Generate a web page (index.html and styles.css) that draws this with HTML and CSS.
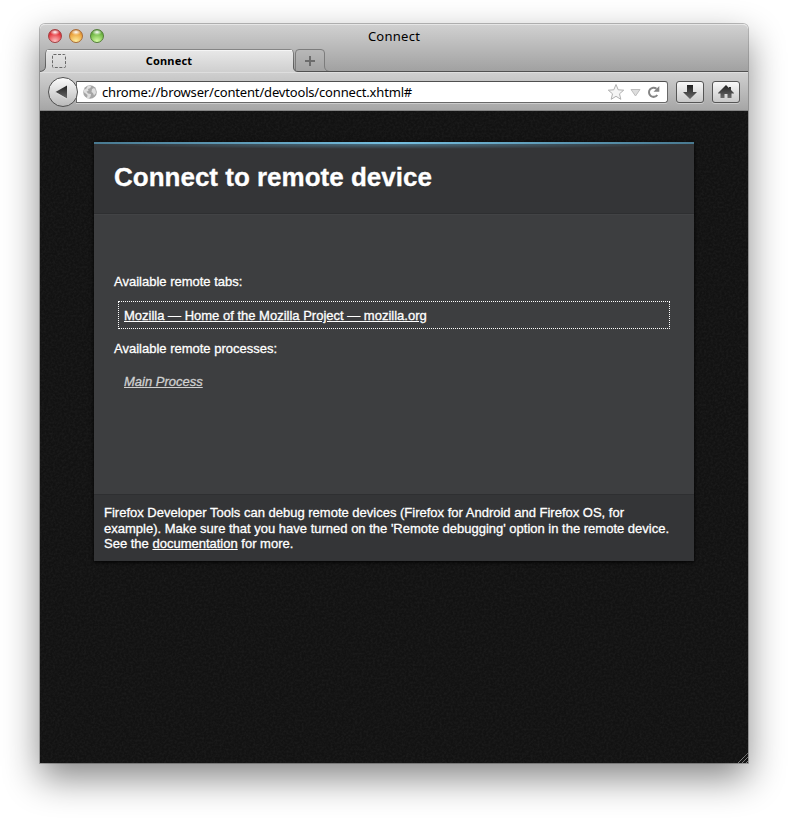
FILE: index.html
```html
<!DOCTYPE html>
<html lang="en">
<head>
<meta charset="utf-8">
<title>Connect</title>
<link rel="stylesheet" href="styles.css">
</head>
<body>
<div class="window">
  <header class="chrome">
    <div class="titlebar">
      <div class="lights"><i class="light red"></i><i class="light amber"></i><i class="light green"></i></div>
      <span class="window-title">Connect</span>
    </div>
    <div class="tabstrip">
      <svg class="tabshape" width="708" height="23" viewBox="0 0 708 23">
        <defs>
          <linearGradient id="tab" x1="0" y1="0" x2="0" y2="1"><stop offset="0" stop-color="#e9e9e9"/><stop offset="1" stop-color="#cfcfcf"/></linearGradient>
          <linearGradient id="edge" x1="0" y1="0" x2="0" y2="1"><stop offset="0" stop-color="#858585"/><stop offset="1" stop-color="#505050"/></linearGradient>
          <linearGradient id="plus" x1="0" y1="0" x2="0" y2="1"><stop offset="0" stop-color="#b8b8b8"/><stop offset="1" stop-color="#a2a2a2"/></linearGradient>
        </defs>
        <path d="M255.500 22V4Q255.500 .500 259 .500H281Q284.500 .500 284.500 4V17Q284.500 21.500 289 22.500" fill="url(#plus)" stroke="#7c7c7c"/>
        <path d="M0 23V22Q5.500 22 5.500 17V4Q5.500 .500 9 .500H250Q253.500 .500 253.500 4V18Q253.500 22 257 22V23Z" fill="url(#tab)"/>
        <path d="M-1 22.500Q5.500 22.500 5.500 17V4Q5.500 .500 9 .500H250Q253.500 .500 253.500 4V18Q253.500 22.500 258 22.500H708" fill="none" stroke="url(#edge)"/>
        <path d="M7 1.500H252" stroke="#f5f5f5"/>
        <rect x="12.500" y="5.500" width="13" height="13" rx="1" fill="none" stroke="#686868" stroke-dasharray="3 1.500"/>
        <path d="M270 7V17M265 12H275" stroke="#6c6c6c" stroke-width="2"/>
      </svg>
      <span class="tab-label">Connect</span>
    </div>
    <div class="toolbar">
      <svg class="back" width="30" height="32" viewBox="0 0 30 32">
        <defs><linearGradient id="bk" x1="0" y1="0" x2="0" y2="1"><stop offset="0" stop-color="#fcfcfc"/><stop offset="1" stop-color="#b9b9b9"/></linearGradient>
        <linearGradient id="ic" x1="0" y1="0" x2="0" y2="1"><stop offset="0" stop-color="#202020"/><stop offset="1" stop-color="#6a6a6a"/></linearGradient></defs>
        <circle cx="15" cy="15" r="14.500" fill="url(#bk)" stroke="#4f4f4f"/>
        <path d="M7.500 15L19 8.500V21.500Z" fill="url(#ic)"/>
        <path d="M8 15.500L19 22" stroke="#eee" stroke-width=".5"/>
      </svg>
      <div class="urlbar">
        <svg width="14" height="14" viewBox="0 0 14 14"><circle cx="7" cy="7" r="6.800" fill="#a5a5a5"/><path d="M5 .5L8 1 7.500 3 5 4 5.500 6 3.500 6.500 5 8.500 8 9 7.500 11.500 6 13.500 4 13 4.500 10 2 8 .500 7 1 4.500 3 4ZM9 4L11 3 12.500 4.500 13 8 11 10.500 10 8 8.500 7Z" fill="#dedede"/></svg>
        <span class="url">chrome://browser/content/devtools/connect.xhtml#</span>
        <svg class="url-icons" width="58" height="20" viewBox="0 0 58 20">
          <path d="M9 2.500L11.200 7.800 16.700 8.200 12.500 11.800 13.800 17.300 9 14.300 4.200 17.300 5.500 11.800 1.300 8.200 6.800 7.800Z" fill="#f5f5f5" stroke="#b0b0b0"/>
          <path d="M24 7.500H33L28.500 14Z" fill="#ddd" stroke="#bdbdbd"/>
          <path d="M50.300 13A4.600 4.600 0 1 1 49.500 6.700" fill="none" stroke="#858585" stroke-width="2"/><path d="M46.500 9.800H52.300V4Z" fill="#858585"/>
        </svg>
      </div>
      <div class="button"><svg width="16" height="16" viewBox="0 0 16 16"><path d="M5 1H11V8H15L8 15 1 8H5Z" fill="url(#ic)"/></svg></div>
      <div class="button"><svg width="16" height="16" viewBox="0 0 16 16"><path d="M8 1L11 4V3H13V6L16 9V9.500H13.500V14H9.500V10H6.500V14H2.500V9.500H0V9Z" fill="url(#ic)"/></svg></div>
    </div>
  </header>
  <main class="page">
    <svg class="noise" width="708" height="652"><filter id="grain" x="0" y="0" width="100%" height="100%"><feTurbulence type="fractalNoise" baseFrequency=".45" numOctaves="2"/><feColorMatrix values="0 0 0 0 1  0 0 0 0 1  0 0 0 0 1  .08 0 0 0 -.028"/></filter><rect width="708" height="652" filter="url(#grain)"/></svg>
    <section class="card">
      <h1>Connect to remote device</h1>
      <div class="list">
        <p>Available remote tabs:</p>
        <div class="item focused"><a href="#">Mozilla — Home of the Mozilla Project — mozilla.org</a></div>
        <p>Available remote processes:</p>
        <div class="item process"><a href="#">Main Process</a></div>
      </div>
      <footer>
        <div class="line">Firefox Developer Tools can debug remote devices (Firefox for Android and Firefox OS, for</div>
        <div class="line">example). Make sure that you have turned on the 'Remote debugging' option in the remote device.</div>
        <div class="line">See the <a href="#">documentation</a> for more.</div>
      </footer>
    </section>
    <svg class="grip" width="10" height="10" viewBox="0 0 10 10"><path d="M0 10L10 0M4 10L10 4M8 10L10 8" stroke="#aaa" stroke-dasharray="1 .5"/></svg>
  </main>
</div>
</body>
</html>
```
FILE: styles.css
```css
* { box-sizing: border-box; }
body { margin: 0; padding: 24px 40px 0; height: 818px; overflow: hidden; background: #fff; }
.window { width: 708px; height: 739px; border-radius: 5px 5px 0 0; box-shadow: 0 0 0 1px rgba(0,0,0,.25), 0 15px 36px rgba(0,0,0,.48); }
.chrome { height: 87px; border-radius: 5px 5px 0 0; overflow: hidden; border-top: 1px solid #e6e6e6; background: linear-gradient(#d0d0d0, #a0a0a0 47px); font-family: "Noto Sans", sans-serif; color: #000; }
.titlebar { position: relative; height: 24px; display: flex; align-items: center; justify-content: center; }
.lights { position: absolute; left: 8px; top: 4px; display: flex; gap: 7px; }
.light { width: 14px; height: 14px; border-radius: 50%; border: 1px solid; }
.red { border-color: #a33d3f; background: radial-gradient(ellipse 5px 3px at 50% 18%, #fff, transparent), radial-gradient(circle at 50% 95%, #ffc4c4, #e4383f 65%, #a52a30); }
.amber { border-color: #a96b35; background: radial-gradient(ellipse 5px 3px at 50% 18%, #fff, transparent), radial-gradient(circle at 50% 95%, #fff0a0, #eba13b 65%, #a8642a); }
.green { border-color: #527e37; background: radial-gradient(ellipse 5px 3px at 50% 18%, #fff, transparent), radial-gradient(circle at 50% 95%, #d8ffa8, #70b744 65%, #447b2b); }
.window-title { font-size: 13px; letter-spacing: .25px; line-height: 22px; margin-top: -2px; }
.tabstrip { position: relative; height: 23px; }
.tabshape { position: absolute; inset: 0; }
.tab-label { position: relative; display: block; width: 248px; margin-left: 5px; text-align: center; font-size: 11px; font-weight: 700; line-height: 24px; letter-spacing: .2px; }
.toolbar { height: 39px; display: flex; align-items: flex-start; padding: 8px 8px 0; background: linear-gradient(#cfcfcf, #a6a6a6); border-top: 1px solid #dedede; border-bottom: 1px solid #858585; }
.back { position: relative; z-index: 1; margin-top: -4px; flex: none; }
.urlbar { width: 592px; height: 22px; margin-left: -2px; margin-right: 8px; padding: 0 2px 0 6px; display: flex; align-items: center; border: 1px solid #686868; border-top-color: #505050; border-radius: 0 3px 3px 0; background: #fff; box-shadow: 0 1px #ccc; }
.url { flex: 1; margin-left: 5px; font-size: 13px; letter-spacing: -.17px; line-height: 20px; white-space: nowrap; }
.button { flex: none; width: 28px; height: 22px; display: flex; align-items: center; justify-content: center; border: 1px solid #555; border-radius: 3px; background: linear-gradient(#f8f8f8, #c9c9c9); box-shadow: 0 1px #ccc; }
.button + .button { margin-left: 8px; }
.page { position: relative; height: 652px; padding: 31px 54px 0; background: #121212; font: 13px/15.500px "Liberation Sans", Arial, sans-serif; color: #fff; -webkit-text-stroke: .3px; }
.noise { position: absolute; inset: 0; }
.card { position: relative; width: 600px; height: 419px; background: #3d3e40; box-shadow: 0 1px 4px #000; }
h1 { margin: 0; height: 72px; padding: 20px 20px 0; border-bottom: 1px solid #2e2f31; background: linear-gradient(90deg, #497990, #75bfe0 50%, #497990) 0 0 / 100% 2px no-repeat, radial-gradient(ellipse 50% 5px at 50% 2px, rgba(95,165,200,.5), transparent), #343537; font-size: 26px; line-height: 30px; }
.list { height: 280px; padding: 59px 20px 0; border-top: 1px solid #424345; }
.list p { margin: 0; line-height: 15px; }
.item { width: 552px; height: 28px; margin: 12px 0 12px 4px; padding-left: 5px; line-height: 27px; border: 1px solid transparent; }
.focused { border: 1px dotted #fff; }
.process { font-style: italic; margin-top: 11px; }
.process a { color: #d0d0d0; }
a { color: #fff; }
footer { height: 67px; padding: 10px; border-top: 1px solid #2e2f31; background: #343537; }
.line { white-space: nowrap; }
.grip { position: absolute; right: 0; bottom: 0; }
```
